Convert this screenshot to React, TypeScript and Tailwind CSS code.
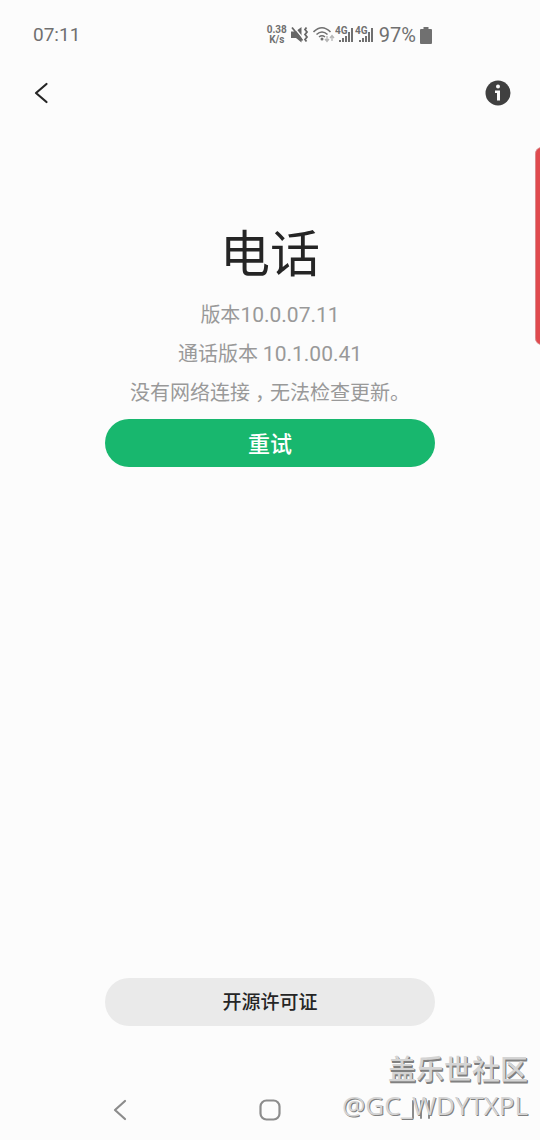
const StatusBar = () => (
  <header className="flex h-[70px] items-center justify-between pr-[108px] pl-[33px] text-[#707070]">
    <time className="text-[19px] leading-6">07:11</time>
    <div className="flex items-center gap-1">
      <div className="text-center text-[10px] leading-[10px] font-bold">
        <div>0.38</div>
        <div>K/s</div>
      </div>
      <MutedIcon />
      <div className="flex">
        <WifiIcon />
        <SignalIcon />
        <SignalIcon />
      </div>
      <span className="text-[20px] leading-6">97%</span>
      <svg width="12" height="17" viewBox="0 0 12 17" fill="currentColor" aria-hidden="true">
        <path d="M3.5 0h5v2H11q1 0 1 1v13q0 1-1 1H1q-1 0-1-1V3q0-1 1-1h2.500z" />
      </svg>
    </div>
  </header>
);

const MutedIcon = () => (
  <svg width="18" height="18" viewBox="0 0 18 18" fill="none" aria-hidden="true">
    <path d="M0 5.500h4.500L10.500 1v15.500L5 12H0z" fill="#666" />
    <path d="M2 0l11 13.500" stroke="#fcfcfc" strokeWidth="1.500" />
    <path d="M1 1.500l10.500 13" stroke="#666" strokeWidth="1.800" />
    <path d="M15.500 1.500l-1.500 2 2 2.500-2 2.500 2 2.500-2 2.500 1.500 2" stroke="#666" strokeWidth="1.800" />
  </svg>
);

const WifiIcon = () => (
  <svg width="22" height="18" viewBox="0 0 22 18" fill="none" aria-hidden="true">
    <g stroke="#707070" strokeWidth="1.600">
      <path d="M.5 6Q9-2.500 17.500 6" />
      <path d="M3.500 8.500Q9 3.500 14.500 8.500" />
      <path d="M6 11Q9 8.500 12 11" />
    </g>
    <circle cx="9" cy="13" r="1.500" fill="#707070" />
    <path d="M14 10v5m-2-2l2 2.500 2-2.500M19 15V9.500m-2 2.500l2-2.500 2 2.500" stroke="#b5b5b5" strokeWidth="1.300" />
  </svg>
);

const SignalIcon = () => (
  <svg width="20" height="18" viewBox="0 0 20 18" fill="#707070" aria-hidden="true">
    <text x="0" y="8" fontSize="10" fontWeight="700">4G</text>
    <path d="M4 14h2v2H4zM7 12h2v4H7zM10 10h2v6h-2zM13 6h2v10h-2zM16 2h2v14h-2z" />
  </svg>
);

const Toolbar = () => (
  <nav className="flex h-[46px] items-center justify-between pr-[29px] pl-[33px]">
    <button type="button" aria-label="返回">
      <svg width="17" height="22" viewBox="0 0 17 22" fill="none" stroke="#252525" strokeWidth="2.200" strokeLinecap="round" strokeLinejoin="round">
        <path d="M13.500 2L3 11l10.500 9" />
      </svg>
    </button>
    <button type="button" aria-label="应用信息">
      <svg width="26" height="26" viewBox="0 0 26 26" fill="#404040">
        <circle cx="13" cy="13" r="12.500" />
        <g fill="#fcfcfc">
          <circle cx="13" cy="6.500" r="2" />
          <path d="M10 10.500h5v10h-3v-7.500h-2z" />
        </g>
      </svg>
    </button>
  </nav>
);

const SystemNav = () => (
  <footer className="grid h-[60px] grid-cols-3 items-center px-[45px] text-[#8c8c8c]">
    <button type="button" aria-label="后退" className="justify-self-center">
      <svg width="14" height="22" viewBox="0 0 14 22" fill="none" stroke="currentColor" strokeWidth="2.200" strokeLinecap="round" strokeLinejoin="round">
        <path d="M12 2L2 11l10 9" />
      </svg>
    </button>
    <button type="button" aria-label="主屏幕" className="justify-self-center">
      <svg width="22" height="22" viewBox="0 0 22 22" fill="none" stroke="currentColor" strokeWidth="2.200">
        <rect x="1.500" y="1.500" width="19" height="19" rx="6" />
      </svg>
    </button>
    <button type="button" aria-label="最近任务" className="justify-self-center">
      <svg width="20" height="20" viewBox="0 0 20 20" stroke="currentColor" strokeWidth="2" strokeLinecap="round">
        <path d="M3 1v17M11 1v17M19 1v17" />
      </svg>
    </button>
  </footer>
);

const Watermark = () => (
  <div className="pointer-events-none absolute right-3 bottom-[17px] text-right font-['Open_Sans','Noto_Sans_CJK_SC',sans-serif] whitespace-nowrap text-[#d4d4d4]">
    <div className="text-[28px] leading-9 font-medium [text-shadow:1px_1px_0_#808080,1px_2px_0_#808080]">盖乐世社区</div>
    <div className="text-[26px] leading-9 [text-shadow:1px_1px_0_#808080]">@GC_WDYTXPL</div>
  </div>
);

const App = () => (
  <div className="relative flex min-h-screen flex-col overflow-hidden bg-[#fcfcfc] font-[Roboto,'Noto_Sans_CJK_SC',sans-serif]">
    <StatusBar />
    <Toolbar />

    <main className="flex flex-1 flex-col items-center px-[105px] pt-[104px] pb-[54px]">
      <h1 className="text-[50px] leading-[70px] text-[#252525]">电话</h1>
      <div className="mt-1.5 text-center text-[20px] leading-[39px] whitespace-nowrap text-[#999]">
        <p>
          版本<span className="text-[21px]">10.0.07.11</span>
        </p>
        <p>
          通话版本 <span className="text-[21px]">10.1.00.41</span>
        </p>
        <p>
          没有网络连接
          <span className="inline-block w-5 text-center [font-feature-settings:'halt']">，</span>
          无法检查更新。
        </p>
      </div>
      <button type="button" className="mt-1.5 h-12 w-full rounded-full bg-[#18b76e] pt-0.5 text-[22px] font-medium text-white">
        重试
      </button>
      <button type="button" className="mt-auto h-12 w-full rounded-full bg-[#eaeaea] pt-0.5 text-[19px] font-medium text-[#252525]">
        开源许可证
      </button>
    </main>

    <SystemNav />
    <aside className="absolute top-[147px] -right-2 h-[198px] w-[13px] rounded-lg border border-[#d98a8c] bg-[#e04a4e]" />
    <Watermark />
  </div>
);

export default App;
